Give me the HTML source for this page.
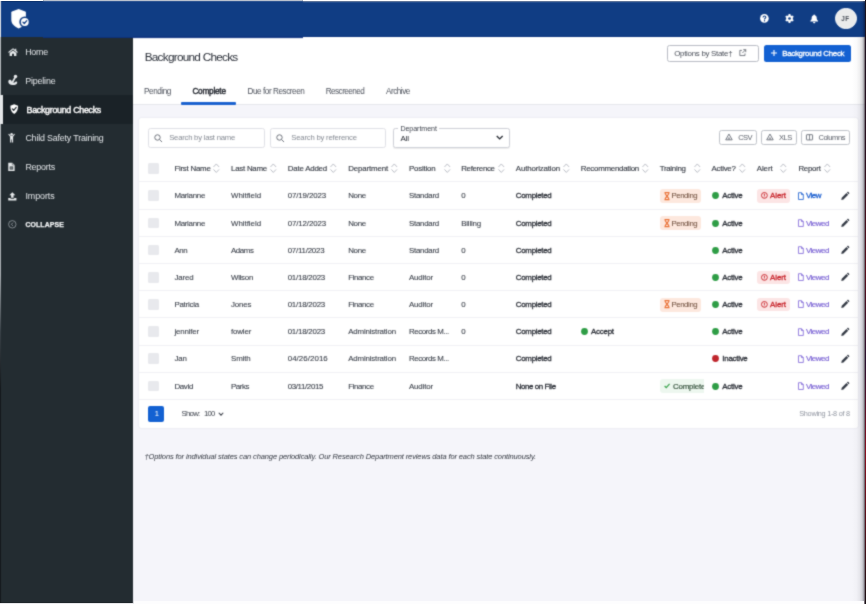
<!DOCTYPE html>
<html><head><meta charset="utf-8"><title>Background Checks</title>
<style>
*{box-sizing:border-box;margin:0;padding:0}
html,body{width:866px;height:604px;overflow:hidden;background:#fff}
body{font-family:"Liberation Sans",sans-serif;position:relative;color:#2b3038}
#w{position:absolute;left:0;top:0;width:866px;height:604px;filter:url(#bl)}
.a,.t{position:absolute}
.t{white-space:nowrap;line-height:12px;height:12px}
svg{position:absolute;overflow:visible}
.hl{position:absolute;left:139px;width:719px;height:1px;background:#f0f0f5}
.cb{position:absolute;left:148px;width:10.6px;height:10.8px;background:#e8e9ed;border-radius:1.5px}
.dot{position:absolute;width:6.8px;height:6.8px;border-radius:50%}
.pill{position:absolute;height:14px;border-radius:3px}
.in{position:absolute;top:128px;height:20px;border:1px solid #dfe0e6;border-radius:2.5px;background:#fff}
.sb{position:absolute;top:130px;height:15.4px;border:1px solid #bfc2c9;border-radius:2.5px;background:#fff}
</style></head><body><svg width="0" height="0" style="position:absolute"><filter id="bl" x="0" y="0" width="100%" height="100%" color-interpolation-filters="sRGB"><feConvolveMatrix order="3" kernelMatrix="0.03 0.1 0.03 0.1 0.48 0.1 0.03 0.1 0.03" edgeMode="duplicate" preserveAlpha="true"/></filter></svg><div id="w">

<div class="a" style="left:0;top:1px;width:866px;height:36px;background:#103d84"></div>
<div class="a" style="left:0;top:0;width:1.3px;height:37px;background:#dfe2e8"></div>
<div class="a" style="left:43px;top:37px;width:260px;height:1px;background:#103d84;opacity:.85"></div>
<div class="a" style="left:43px;top:0;width:260px;height:1px;background:#d9dadc"></div>
<div class="a" style="left:303px;top:1px;width:563px;height:1px;background:rgba(255,255,255,.5)"></div>
<div class="a" style="left:1px;top:37px;width:132px;height:566px;background:#232c31"></div>
<div class="a" style="left:0;top:37px;width:1.3px;height:566px;background:linear-gradient(to bottom,#b4b9bc 0%,#a9aeb2 42%,#3a4248 52%,#14181b 62%,#14181b 100%)"></div>
<div class="a" style="left:2.6px;top:94.8px;width:130.4px;height:28.8px;background:#1a2227"></div>
<div class="a" style="left:0;top:94.8px;width:2.6px;height:28.8px;background:#e4e6e8"></div>
<div class="a" style="left:133px;top:37px;width:733px;height:567px;background:#f5f5fa"></div>
<div class="a" style="left:133px;top:37px;width:733px;height:68px;background:#fff;border-bottom:1px solid #e6e7ec"></div>
<div class="a" style="left:43px;top:37px;width:260px;height:1px;background:#0c3280;opacity:.92"></div>
<div class="a" style="left:133px;top:38px;width:170px;height:1px;background:#0c3280;opacity:.1"></div>
<div class="a" style="left:133px;top:36px;width:733px;height:1px;background:#0b2f7e;opacity:.55"></div>
<div class="a" style="left:139px;top:118px;width:719px;height:309.6px;background:#fff;border-radius:2px;box-shadow:0 0 1.5px rgba(70,70,110,.18)"></div>
<svg style="left:0;top:0" width="40" height="37" viewBox="0 0 40 37">
<path d="M18.6 9.1 L25.3 11.5 Q25.9 11.8 25.9 12.5 V19.8 C25.9 24 22.6 26.8 18.7 28.4 C14.7 26.8 11.3 24 11.3 19.8 V12.5 Q11.3 11.8 11.9 11.5 Z" fill="#fff"/>
<circle cx="24.8" cy="22" r="5.5" fill="#103d84"/>
<circle cx="24.8" cy="22" r="3.9" fill="#fff"/>
<path d="M22.9 22.1 L24.3 23.5 L26.8 20.6" fill="none" stroke="#103d84" stroke-width="1.25" stroke-linecap="round" stroke-linejoin="round"/>
</svg>
<svg style="left:760.4px;top:14px" width="8.8" height="8.8" viewBox="0 0 9 9"><circle cx="4.5" cy="4.5" r="4.4" fill="#fff"/><path d="M3.1 3.5C3.1 2.6 3.7 2.1 4.5 2.1C5.4 2.1 6 2.6 6 3.4C6 4.4 4.6 4.4 4.6 5.5" fill="none" stroke="#103d84" stroke-width="1.1"/><circle cx="4.6" cy="6.9" r="0.65" fill="#103d84"/></svg>
<svg style="left:785.3px;top:14px" width="9" height="9" viewBox="0 0 9 9"><circle cx="4.5" cy="4.5" r="3.3" fill="#fff"/><g stroke="#fff" stroke-width="1.9"><path d="M4.5 0.1V8.9M0.7 2.3L8.3 6.7M8.3 2.3L0.7 6.7"/></g><circle cx="4.5" cy="4.5" r="1.35" fill="#103d84"/></svg>
<svg style="left:810.4px;top:13.8px" width="8.4" height="9.8" viewBox="0 0 9 10"><path d="M4.5 0.3 C4 0.3 3.7 0.6 3.7 1 C2.4 1.4 1.8 2.5 1.8 4 C1.8 5.8 1.2 6.3 0.4 7.1 V7.8 H8.6 V7.1 C7.8 6.3 7.2 5.8 7.2 4 C7.2 2.5 6.6 1.4 5.3 1 C5.3 0.6 5 0.3 4.5 0.3 Z" fill="#fff"/><path d="M3.3 8.4 H5.7 C5.7 9.2 5.2 9.8 4.5 9.8 C3.8 9.8 3.3 9.2 3.3 8.4Z" fill="#fff"/></svg>
<div class="a" style="left:835px;top:7.6px;width:21.6px;height:21.6px;border-radius:50%;background:#ebebeb;border:1px solid #fff"></div>
<svg style="left:8.2px;top:47.6px" width="10" height="8" viewBox="0 0 11 9"><path d="M5.5 0.2 L0.1 4.6 L0.9 5.5 L5.5 1.8 L10.1 5.5 L10.9 4.6 L9.2 3.2 V0.8 H7.9 V2.1 Z" fill="#e6e9eb"/><path d="M5.5 2.7 L1.7 5.7 V8.9 H4.4 V6.4 H6.6 V8.9 H9.3 V5.7 Z" fill="#e6e9eb"/></svg>
<svg style="left:0;top:70px" width="24" height="20" viewBox="0 70 24 20"><circle cx="15.5" cy="76.5" r="1.75" fill="#e6e9eb"/><path d="M15 77.6L12.6 82" stroke="#e6e9eb" stroke-width="1.7" stroke-linecap="round"/><path d="M8.3 81.6C8.3 80.1 9.4 79.6 10.4 79.8C11.5 80 11.6 81.6 12.4 82.4L14.8 82.4C15.4 81 17.2 81.1 17.2 82.5C17.2 84.3 15.1 85.1 12.6 85.1C10 85.1 8.3 83.9 8.3 81.6Z" fill="#e6e9eb"/></svg>
<svg style="left:9.6px;top:104.3px" width="8.4" height="10.2" viewBox="0 0 10 12"><path d="M5 0.2 L0.4 1.9 C0.3 6.2 1.6 9.7 5 11.8 C8.4 9.7 9.7 6.2 9.6 1.9 Z" fill="#fff"/><path d="M2.8 5.8 L4.4 7.4 L7.4 4" fill="none" stroke="#1a2227" stroke-width="1.4" stroke-linecap="round" stroke-linejoin="round"/></svg>
<svg style="left:8.3px;top:132.8px" width="7.2" height="9.8" viewBox="0 0 8 11"><circle cx="4" cy="1.5" r="1.4" fill="#e6e9eb"/><path d="M0.2 1.5 L1.1 0.8 L3 3.1 H5 L6.9 0.8 L7.8 1.5 L5.7 4.3 V10.8 H4.4 V7.4 H3.6 V10.8 H2.3 V4.3 Z" fill="#e6e9eb"/></svg>
<svg style="left:8.3px;top:162px" width="6.9" height="9.6" viewBox="0 0 8 10"><path d="M0.3 0.2 H5 L7.7 2.9 V9.8 H0.3 Z" fill="#e6e9eb"/><path d="M2 4.6 H6 V8.2 H2Z" fill="#232c31"/><path d="M2.6 5.5H5.4M2.6 6.4H5.4M2.6 7.3H5.4" stroke="#e6e9eb" stroke-width="0.45"/><path d="M5 0.2V2.9H7.7" fill="none" stroke="#232c31" stroke-width="0.5"/></svg>
<svg style="left:8.3px;top:191.8px" width="8.7" height="8.7" viewBox="0 0 10 10"><path d="M5 0.2 L8.4 3.7 H6.4 V6.7 H3.6 V3.7 H1.6 Z" fill="#e6e9eb"/><path d="M0.3 7 H2.9 V7.7 H7.1 V7 H9.7 V9.8 H0.3 Z" fill="#e6e9eb"/></svg>
<svg style="left:8.3px;top:220.3px" width="8.6" height="8.6" viewBox="0 0 9 9"><circle cx="4.5" cy="4.5" r="3.9" fill="none" stroke="#a4abb1" stroke-width="0.75"/><path d="M5.2 2.8 L3.5 4.5 L5.2 6.2" fill="none" stroke="#a4abb1" stroke-width="0.85"/></svg>
<div class="a" style="left:667px;top:44.9px;width:91.7px;height:16.8px;border:1px solid #b9bcc4;border-radius:2.5px;background:#fff"></div>
<svg style="left:738.6px;top:49.4px" width="7.4" height="7.4" viewBox="0 0 8 8"><path d="M3.2 1.5H0.9V7.1H6.5V4.8M4.6 0.7H7.3V3.4M7.3 0.7L3.6 4.4" fill="none" stroke="#5a5f69" stroke-width="0.85"/></svg>
<div class="a" style="left:764px;top:44.9px;width:87px;height:16.8px;border-radius:2.5px;background:#1361d2"></div>
<svg style="left:770.7px;top:50.3px" width="6" height="6" viewBox="0 0 6 6"><path d="M3 0V6M0 3H6" stroke="#fff" stroke-width="1.1"/></svg>
<div class="a" style="left:181.4px;top:102.4px;width:55px;height:2.5px;background:#1b62cf;border-radius:1px"></div>
<div class="in" style="left:148.4px;width:116.4px"></div><svg style="left:153.5px;top:133.8px" width="8.7" height="8.7" viewBox="0 0 8 8"><circle cx="3.2" cy="3.2" r="2.5" fill="none" stroke="#6b7079" stroke-width="0.9"/><path d="M5.1 5.1L7.4 7.4" stroke="#6b7079" stroke-width="0.9"/></svg>
<div class="in" style="left:270px;width:116.4px"></div><svg style="left:275.5px;top:133.8px" width="8.7" height="8.7" viewBox="0 0 8 8"><circle cx="3.2" cy="3.2" r="2.5" fill="none" stroke="#6b7079" stroke-width="0.9"/><path d="M5.1 5.1L7.4 7.4" stroke="#6b7079" stroke-width="0.9"/></svg>
<div class="in" style="left:393px;width:116.6px;border-color:#cfd1d8;box-shadow:0 0.5px 1px rgba(0,0,0,.08)"></div>
<div class="a" style="left:398.4px;top:126px;width:40.6px;height:5px;background:#fff"></div>
<svg style="left:496.4px;top:135.2px" width="7.4" height="5" viewBox="0 0 8 5"><path d="M0.8 0.8L4 4L7.2 0.8" fill="none" stroke="#23272f" stroke-width="1.4"/></svg>
<div class="sb" style="left:719.3px;width:37.6px"></div><svg style="left:724.8px;top:133.2px" width="7.9" height="7.9" viewBox="0 0 9 9"><path d="M4.5 1.2L8.2 7.8H0.8Z" fill="none" stroke="#6a6f79" stroke-width="1.05" stroke-linejoin="round"/><path d="M4.5 5L5.7 7H3.3Z" fill="none" stroke="#6a6f79" stroke-width="0.7" stroke-linejoin="round"/></svg>
<div class="sb" style="left:760.8px;width:36px"></div><svg style="left:766px;top:133.2px" width="7.9" height="7.9" viewBox="0 0 9 9"><path d="M4.5 1.2L8.2 7.8H0.8Z" fill="none" stroke="#6a6f79" stroke-width="1.05" stroke-linejoin="round"/><path d="M4.5 5L5.7 7H3.3Z" fill="none" stroke="#6a6f79" stroke-width="0.7" stroke-linejoin="round"/></svg>
<div class="sb" style="left:800.7px;width:49.4px"></div>
<svg style="left:805.7px;top:134px" width="7" height="6.6" viewBox="0 0 8 7"><rect x="0.5" y="0.5" width="7" height="6" rx="0.5" fill="none" stroke="#646973" stroke-width="1"/><path d="M4 0.5V6.5" stroke="#646973" stroke-width="0.9"/></svg>
<div class="cb" style="top:163px"></div>
<svg style="left:213.3px;top:163px" width="6.6" height="10.4" viewBox="0 0 7 11"><path d="M0.8 3.9 L3.5 1 L6.2 3.9 M0.8 7.1 L3.5 10 L6.2 7.1" fill="none" stroke="#b6b9c1" stroke-width="1" stroke-linecap="round" stroke-linejoin="round"/></svg>
<svg style="left:270px;top:163px" width="6.6" height="10.4" viewBox="0 0 7 11"><path d="M0.8 3.9 L3.5 1 L6.2 3.9 M0.8 7.1 L3.5 10 L6.2 7.1" fill="none" stroke="#b6b9c1" stroke-width="1" stroke-linecap="round" stroke-linejoin="round"/></svg>
<svg style="left:330.3px;top:163px" width="6.6" height="10.4" viewBox="0 0 7 11"><path d="M0.8 3.9 L3.5 1 L6.2 3.9 M0.8 7.1 L3.5 10 L6.2 7.1" fill="none" stroke="#b6b9c1" stroke-width="1" stroke-linecap="round" stroke-linejoin="round"/></svg>
<svg style="left:391.4px;top:163px" width="6.6" height="10.4" viewBox="0 0 7 11"><path d="M0.8 3.9 L3.5 1 L6.2 3.9 M0.8 7.1 L3.5 10 L6.2 7.1" fill="none" stroke="#b6b9c1" stroke-width="1" stroke-linecap="round" stroke-linejoin="round"/></svg>
<svg style="left:443.5px;top:163px" width="6.6" height="10.4" viewBox="0 0 7 11"><path d="M0.8 3.9 L3.5 1 L6.2 3.9 M0.8 7.1 L3.5 10 L6.2 7.1" fill="none" stroke="#b6b9c1" stroke-width="1" stroke-linecap="round" stroke-linejoin="round"/></svg>
<svg style="left:498px;top:163px" width="6.6" height="10.4" viewBox="0 0 7 11"><path d="M0.8 3.9 L3.5 1 L6.2 3.9 M0.8 7.1 L3.5 10 L6.2 7.1" fill="none" stroke="#b6b9c1" stroke-width="1" stroke-linecap="round" stroke-linejoin="round"/></svg>
<svg style="left:562.9px;top:163px" width="6.6" height="10.4" viewBox="0 0 7 11"><path d="M0.8 3.9 L3.5 1 L6.2 3.9 M0.8 7.1 L3.5 10 L6.2 7.1" fill="none" stroke="#b6b9c1" stroke-width="1" stroke-linecap="round" stroke-linejoin="round"/></svg>
<svg style="left:641.7px;top:163px" width="6.6" height="10.4" viewBox="0 0 7 11"><path d="M0.8 3.9 L3.5 1 L6.2 3.9 M0.8 7.1 L3.5 10 L6.2 7.1" fill="none" stroke="#b6b9c1" stroke-width="1" stroke-linecap="round" stroke-linejoin="round"/></svg>
<svg style="left:693.8px;top:163px" width="6.6" height="10.4" viewBox="0 0 7 11"><path d="M0.8 3.9 L3.5 1 L6.2 3.9 M0.8 7.1 L3.5 10 L6.2 7.1" fill="none" stroke="#b6b9c1" stroke-width="1" stroke-linecap="round" stroke-linejoin="round"/></svg>
<svg style="left:739px;top:163px" width="6.6" height="10.4" viewBox="0 0 7 11"><path d="M0.8 3.9 L3.5 1 L6.2 3.9 M0.8 7.1 L3.5 10 L6.2 7.1" fill="none" stroke="#b6b9c1" stroke-width="1" stroke-linecap="round" stroke-linejoin="round"/></svg>
<svg style="left:780.3px;top:163px" width="6.6" height="10.4" viewBox="0 0 7 11"><path d="M0.8 3.9 L3.5 1 L6.2 3.9 M0.8 7.1 L3.5 10 L6.2 7.1" fill="none" stroke="#b6b9c1" stroke-width="1" stroke-linecap="round" stroke-linejoin="round"/></svg>
<svg style="left:823.8px;top:163px" width="6.6" height="10.4" viewBox="0 0 7 11"><path d="M0.8 3.9 L3.5 1 L6.2 3.9 M0.8 7.1 L3.5 10 L6.2 7.1" fill="none" stroke="#b6b9c1" stroke-width="1" stroke-linecap="round" stroke-linejoin="round"/></svg>
<div class="hl" style="top:180.6px"></div>
<div class="cb" style="top:190.4px"></div>
<div class="pill" style="left:659.7px;top:188.8px;width:41.6px;background:#fde8de"></div>
<svg style="left:663.6px;top:191.7px" width="6" height="8.3" viewBox="0 0 6 8"><path d="M0.5 0.5H5.5M0.5 7.5H5.5M1.1 0.5C1.1 2.7 2.7 3.1 3 4C3.3 3.1 4.9 2.7 4.9 0.5M1.1 7.5C1.1 5.3 2.7 4.9 3 4C3.3 4.9 4.9 5.3 4.9 7.5" fill="none" stroke="#ea7339" stroke-width="1.15"/></svg>
<svg style="left:711.5px;top:192.4px" width="7" height="7"><circle cx="3.5" cy="3.5" r="3.4" fill="#2e9d45"/></svg>
<div class="pill" style="left:756.8px;top:189.0px;width:32.9px;height:13.8px;background:#fce5e5"></div>
<svg style="left:761px;top:192.2px" width="6.8" height="6.8" viewBox="0 0 7 7"><circle cx="3.5" cy="3.5" r="3" fill="none" stroke="#c8262d" stroke-width="0.95"/><path d="M3.5 1.7V4M3.5 4.7V5.4" stroke="#c8262d" stroke-width="0.95"/></svg>
<svg style="left:797.9px;top:191.7px" width="5.8" height="8.2" viewBox="0 0 6 8"><path d="M0.5 0.5H3.6L5.5 2.4V7.5H0.5Z M3.6 0.5V2.4H5.5" fill="none" stroke="#1b5fd0" stroke-width="0.85" stroke-linejoin="round"/></svg>
<svg style="left:841.3px;top:191.7px" width="8.2" height="8.2" viewBox="0 0 8 8"><path d="M0.3 7.7 L0.7 5.6 L5.3 1 L7 2.7 L2.4 7.3 Z M5.8 0.5 L6.3 0 C6.6 -0.2 7 -0.2 7.3 0.1 L7.9 0.7 C8.2 1 8.2 1.4 8 1.7 L7.5 2.2 Z" fill="#363c47"/></svg>
<div class="hl" style="top:208.7px"></div>
<div class="cb" style="top:217.6px"></div>
<div class="pill" style="left:659.7px;top:216.0px;width:41.6px;background:#fde8de"></div>
<svg style="left:663.6px;top:218.9px" width="6" height="8.3" viewBox="0 0 6 8"><path d="M0.5 0.5H5.5M0.5 7.5H5.5M1.1 0.5C1.1 2.7 2.7 3.1 3 4C3.3 3.1 4.9 2.7 4.9 0.5M1.1 7.5C1.1 5.3 2.7 4.9 3 4C3.3 4.9 4.9 5.3 4.9 7.5" fill="none" stroke="#ea7339" stroke-width="1.15"/></svg>
<svg style="left:711.5px;top:219.6px" width="7" height="7"><circle cx="3.5" cy="3.5" r="3.4" fill="#2e9d45"/></svg>
<svg style="left:797.9px;top:218.9px" width="5.8" height="8.2" viewBox="0 0 6 8"><path d="M0.5 0.5H3.6L5.5 2.4V7.5H0.5Z M3.6 0.5V2.4H5.5" fill="none" stroke="#8068d8" stroke-width="0.85" stroke-linejoin="round"/></svg>
<svg style="left:841.3px;top:218.9px" width="8.2" height="8.2" viewBox="0 0 8 8"><path d="M0.3 7.7 L0.7 5.6 L5.3 1 L7 2.7 L2.4 7.3 Z M5.8 0.5 L6.3 0 C6.6 -0.2 7 -0.2 7.3 0.1 L7.9 0.7 C8.2 1 8.2 1.4 8 1.7 L7.5 2.2 Z" fill="#363c47"/></svg>
<div class="hl" style="top:235.9px"></div>
<div class="cb" style="top:244.7px"></div>
<svg style="left:711.5px;top:246.7px" width="7" height="7"><circle cx="3.5" cy="3.5" r="3.4" fill="#2e9d45"/></svg>
<svg style="left:797.9px;top:246.0px" width="5.8" height="8.2" viewBox="0 0 6 8"><path d="M0.5 0.5H3.6L5.5 2.4V7.5H0.5Z M3.6 0.5V2.4H5.5" fill="none" stroke="#8068d8" stroke-width="0.85" stroke-linejoin="round"/></svg>
<svg style="left:841.3px;top:246.0px" width="8.2" height="8.2" viewBox="0 0 8 8"><path d="M0.3 7.7 L0.7 5.6 L5.3 1 L7 2.7 L2.4 7.3 Z M5.8 0.5 L6.3 0 C6.6 -0.2 7 -0.2 7.3 0.1 L7.9 0.7 C8.2 1 8.2 1.4 8 1.7 L7.5 2.2 Z" fill="#363c47"/></svg>
<div class="hl" style="top:263.0px"></div>
<div class="cb" style="top:271.9px"></div>
<svg style="left:711.5px;top:273.9px" width="7" height="7"><circle cx="3.5" cy="3.5" r="3.4" fill="#2e9d45"/></svg>
<div class="pill" style="left:756.8px;top:270.5px;width:32.9px;height:13.8px;background:#fce5e5"></div>
<svg style="left:761px;top:273.7px" width="6.8" height="6.8" viewBox="0 0 7 7"><circle cx="3.5" cy="3.5" r="3" fill="none" stroke="#c8262d" stroke-width="0.95"/><path d="M3.5 1.7V4M3.5 4.7V5.4" stroke="#c8262d" stroke-width="0.95"/></svg>
<svg style="left:797.9px;top:273.2px" width="5.8" height="8.2" viewBox="0 0 6 8"><path d="M0.5 0.5H3.6L5.5 2.4V7.5H0.5Z M3.6 0.5V2.4H5.5" fill="none" stroke="#8068d8" stroke-width="0.85" stroke-linejoin="round"/></svg>
<svg style="left:841.3px;top:273.2px" width="8.2" height="8.2" viewBox="0 0 8 8"><path d="M0.3 7.7 L0.7 5.6 L5.3 1 L7 2.7 L2.4 7.3 Z M5.8 0.5 L6.3 0 C6.6 -0.2 7 -0.2 7.3 0.1 L7.9 0.7 C8.2 1 8.2 1.4 8 1.7 L7.5 2.2 Z" fill="#363c47"/></svg>
<div class="hl" style="top:290.2px"></div>
<div class="cb" style="top:299.1px"></div>
<div class="pill" style="left:659.7px;top:297.5px;width:41.6px;background:#fde8de"></div>
<svg style="left:663.6px;top:300.4px" width="6" height="8.3" viewBox="0 0 6 8"><path d="M0.5 0.5H5.5M0.5 7.5H5.5M1.1 0.5C1.1 2.7 2.7 3.1 3 4C3.3 3.1 4.9 2.7 4.9 0.5M1.1 7.5C1.1 5.3 2.7 4.9 3 4C3.3 4.9 4.9 5.3 4.9 7.5" fill="none" stroke="#ea7339" stroke-width="1.15"/></svg>
<svg style="left:711.5px;top:301.1px" width="7" height="7"><circle cx="3.5" cy="3.5" r="3.4" fill="#2e9d45"/></svg>
<div class="pill" style="left:756.8px;top:297.7px;width:32.9px;height:13.8px;background:#fce5e5"></div>
<svg style="left:761px;top:300.9px" width="6.8" height="6.8" viewBox="0 0 7 7"><circle cx="3.5" cy="3.5" r="3" fill="none" stroke="#c8262d" stroke-width="0.95"/><path d="M3.5 1.7V4M3.5 4.7V5.4" stroke="#c8262d" stroke-width="0.95"/></svg>
<svg style="left:797.9px;top:300.4px" width="5.8" height="8.2" viewBox="0 0 6 8"><path d="M0.5 0.5H3.6L5.5 2.4V7.5H0.5Z M3.6 0.5V2.4H5.5" fill="none" stroke="#8068d8" stroke-width="0.85" stroke-linejoin="round"/></svg>
<svg style="left:841.3px;top:300.4px" width="8.2" height="8.2" viewBox="0 0 8 8"><path d="M0.3 7.7 L0.7 5.6 L5.3 1 L7 2.7 L2.4 7.3 Z M5.8 0.5 L6.3 0 C6.6 -0.2 7 -0.2 7.3 0.1 L7.9 0.7 C8.2 1 8.2 1.4 8 1.7 L7.5 2.2 Z" fill="#363c47"/></svg>
<div class="hl" style="top:317.4px"></div>
<div class="cb" style="top:326.2px"></div>
<svg style="left:580.8px;top:328.2px" width="7" height="7"><circle cx="3.5" cy="3.5" r="3.4" fill="#2e9d45"/></svg>
<svg style="left:711.5px;top:328.2px" width="7" height="7"><circle cx="3.5" cy="3.5" r="3.4" fill="#2e9d45"/></svg>
<svg style="left:797.9px;top:327.6px" width="5.8" height="8.2" viewBox="0 0 6 8"><path d="M0.5 0.5H3.6L5.5 2.4V7.5H0.5Z M3.6 0.5V2.4H5.5" fill="none" stroke="#8068d8" stroke-width="0.85" stroke-linejoin="round"/></svg>
<svg style="left:841.3px;top:327.6px" width="8.2" height="8.2" viewBox="0 0 8 8"><path d="M0.3 7.7 L0.7 5.6 L5.3 1 L7 2.7 L2.4 7.3 Z M5.8 0.5 L6.3 0 C6.6 -0.2 7 -0.2 7.3 0.1 L7.9 0.7 C8.2 1 8.2 1.4 8 1.7 L7.5 2.2 Z" fill="#363c47"/></svg>
<div class="hl" style="top:344.6px"></div>
<div class="cb" style="top:353.4px"></div>
<svg style="left:711.5px;top:355.4px" width="7" height="7"><circle cx="3.5" cy="3.5" r="3.4" fill="#bf252c"/></svg>
<svg style="left:797.9px;top:354.7px" width="5.8" height="8.2" viewBox="0 0 6 8"><path d="M0.5 0.5H3.6L5.5 2.4V7.5H0.5Z M3.6 0.5V2.4H5.5" fill="none" stroke="#8068d8" stroke-width="0.85" stroke-linejoin="round"/></svg>
<svg style="left:841.3px;top:354.7px" width="8.2" height="8.2" viewBox="0 0 8 8"><path d="M0.3 7.7 L0.7 5.6 L5.3 1 L7 2.7 L2.4 7.3 Z M5.8 0.5 L6.3 0 C6.6 -0.2 7 -0.2 7.3 0.1 L7.9 0.7 C8.2 1 8.2 1.4 8 1.7 L7.5 2.2 Z" fill="#363c47"/></svg>
<div class="hl" style="top:371.7px"></div>
<div class="cb" style="top:380.6px"></div>
<div class="pill" style="left:659.7px;top:379.0px;width:43.9px;background:#edf7ef;border-radius:3px 0 0 3px"></div>
<svg style="left:664px;top:383.1px" width="6.2" height="5.6" viewBox="0 0 8 7"><path d="M0.8 3.8L2.9 5.9L7.2 1" fill="none" stroke="#39a34c" stroke-width="1.5"/></svg>
<svg style="left:711.5px;top:382.6px" width="7" height="7"><circle cx="3.5" cy="3.5" r="3.4" fill="#2e9d45"/></svg>
<svg style="left:797.9px;top:381.9px" width="5.8" height="8.2" viewBox="0 0 6 8"><path d="M0.5 0.5H3.6L5.5 2.4V7.5H0.5Z M3.6 0.5V2.4H5.5" fill="none" stroke="#8068d8" stroke-width="0.85" stroke-linejoin="round"/></svg>
<svg style="left:841.3px;top:381.9px" width="8.2" height="8.2" viewBox="0 0 8 8"><path d="M0.3 7.7 L0.7 5.6 L5.3 1 L7 2.7 L2.4 7.3 Z M5.8 0.5 L6.3 0 C6.6 -0.2 7 -0.2 7.3 0.1 L7.9 0.7 C8.2 1 8.2 1.4 8 1.7 L7.5 2.2 Z" fill="#363c47"/></svg>
<div class="hl" style="top:398.9px"></div>
<div class="a" style="left:148px;top:405.5px;width:16px;height:16.4px;background:#1361d2;border-radius:2px"></div>
<svg style="left:217.8px;top:411.5px" width="6" height="4.2" viewBox="0 0 7 5"><path d="M0.8 0.9L3.5 3.8L6.2 0.9" fill="none" stroke="#3a3f49" stroke-width="1.25"/></svg>
<div class="t" style="left:841.2px;top:13.3px;font-size:6.3px;color:#4a4f58;letter-spacing:0.620px;font-weight:bold">JF</div>
<div class="t" style="left:25.2px;top:46.0px;font-size:8.9px;color:#e3e6e9;letter-spacing:-0.222px">Home</div>
<div class="t" style="left:25.2px;top:74.8px;font-size:8.9px;color:#e3e6e9;letter-spacing:-0.162px">Pipeline</div>
<div class="t" style="left:26.5px;top:103.9px;font-size:8.9px;color:#fff;letter-spacing:-0.290px;-webkit-text-stroke:0.4px #fff">Background Checks</div>
<div class="t" style="left:25.4px;top:132.2px;font-size:8.9px;color:#e3e6e9;letter-spacing:-0.176px">Child Safety Training</div>
<div class="t" style="left:25.4px;top:161.2px;font-size:8.9px;color:#e3e6e9;letter-spacing:-0.211px">Reports</div>
<div class="t" style="left:25.4px;top:189.9px;font-size:8.9px;color:#e3e6e9;letter-spacing:-0.056px">Imports</div>
<div class="t" style="left:25.4px;top:219.0px;font-size:6.9px;color:#f2f4f5;letter-spacing:0.134px;font-weight:bold;-webkit-text-stroke:0.25px #f2f4f5">COLLAPSE</div>
<div class="t" style="left:144.7px;top:50.9px;font-size:11.8px;color:#2a2f38;letter-spacing:-0.752px">Background Checks</div>
<div class="t" style="left:674.2px;top:48.0px;font-size:7.9px;color:#4a4f59;letter-spacing:-0.273px">Options by State†</div>
<div class="t" style="left:782.2px;top:48.0px;font-size:7.9px;color:#fff;letter-spacing:-0.286px;-webkit-text-stroke:0.3px #fff">Background Check</div>
<div class="t" style="left:144.0px;top:85.7px;font-size:8.2px;color:#4d525c;letter-spacing:-0.438px">Pending</div>
<div class="t" style="left:192.4px;top:85.7px;font-size:8.2px;color:#23272f;letter-spacing:-0.206px;-webkit-text-stroke:0.4px #23272f">Complete</div>
<div class="t" style="left:247.5px;top:85.7px;font-size:8.2px;color:#4d525c;letter-spacing:-0.454px">Due for Rescreen</div>
<div class="t" style="left:325.7px;top:85.7px;font-size:8.2px;color:#4d525c;letter-spacing:-0.546px">Rescreened</div>
<div class="t" style="left:386.0px;top:85.7px;font-size:8.2px;color:#4d525c;letter-spacing:-0.502px">Archive</div>
<div class="t" style="left:169.2px;top:132.0px;font-size:7.7px;color:#858a93;letter-spacing:-0.225px">Search by last name</div>
<div class="t" style="left:291.3px;top:132.0px;font-size:7.7px;color:#858a93;letter-spacing:-0.197px">Search by reference</div>
<div class="t" style="left:400.4px;top:123.2px;font-size:7.1px;color:#3f444e;letter-spacing:-0.066px">Department</div>
<div class="t" style="left:400.4px;top:132.6px;font-size:8px;color:#23272f;letter-spacing:-0.164px">All</div>
<div class="t" style="left:738.3px;top:131.7px;font-size:7.5px;color:#5a5f69;letter-spacing:-0.641px">CSV</div>
<div class="t" style="left:779.0px;top:131.7px;font-size:7.5px;color:#5a5f69;letter-spacing:-0.496px">XLS</div>
<div class="t" style="left:818.4px;top:131.7px;font-size:7.5px;color:#5a5f69;letter-spacing:-0.428px">Columns</div>
<div class="t" style="left:174.4px;top:162.6px;font-size:7.9px;color:#3a3f48;letter-spacing:-0.239px;-webkit-text-stroke:0.15px #3a3f48">First Name</div>
<div class="t" style="left:231.0px;top:162.6px;font-size:7.9px;color:#3a3f48;letter-spacing:-0.240px;-webkit-text-stroke:0.15px #3a3f48">Last Name</div>
<div class="t" style="left:287.7px;top:162.6px;font-size:7.9px;color:#3a3f48;letter-spacing:-0.195px;-webkit-text-stroke:0.15px #3a3f48">Date Added</div>
<div class="t" style="left:348.2px;top:162.6px;font-size:7.9px;color:#3a3f48;letter-spacing:-0.143px;-webkit-text-stroke:0.15px #3a3f48">Department</div>
<div class="t" style="left:409.0px;top:162.6px;font-size:7.9px;color:#3a3f48;letter-spacing:-0.222px;-webkit-text-stroke:0.15px #3a3f48">Position</div>
<div class="t" style="left:461.2px;top:162.6px;font-size:7.9px;color:#3a3f48;letter-spacing:-0.323px;-webkit-text-stroke:0.15px #3a3f48">Reference</div>
<div class="t" style="left:515.8px;top:162.6px;font-size:7.9px;color:#3a3f48;letter-spacing:-0.151px;-webkit-text-stroke:0.15px #3a3f48">Authorization</div>
<div class="t" style="left:580.8px;top:162.6px;font-size:7.9px;color:#3a3f48;letter-spacing:-0.260px;-webkit-text-stroke:0.15px #3a3f48">Recommendation</div>
<div class="t" style="left:659.7px;top:162.6px;font-size:7.9px;color:#3a3f48;letter-spacing:-0.290px;-webkit-text-stroke:0.15px #3a3f48">Training</div>
<div class="t" style="left:711.6px;top:162.6px;font-size:7.9px;color:#3a3f48;letter-spacing:-0.270px;-webkit-text-stroke:0.15px #3a3f48">Active?</div>
<div class="t" style="left:756.8px;top:162.6px;font-size:7.9px;color:#3a3f48;letter-spacing:-0.107px;-webkit-text-stroke:0.15px #3a3f48">Alert</div>
<div class="t" style="left:798.4px;top:162.6px;font-size:7.9px;color:#3a3f48;letter-spacing:-0.248px;-webkit-text-stroke:0.15px #3a3f48">Report</div>
<div class="t" style="left:174.4px;top:190.3px;font-size:7.9px;color:#3b404a;letter-spacing:-0.288px;-webkit-text-stroke:0.1px #3b404a">Marianne</div>
<div class="t" style="left:231.0px;top:190.3px;font-size:7.9px;color:#3b404a;letter-spacing:-0.030px;-webkit-text-stroke:0.1px #3b404a">Whitfield</div>
<div class="t" style="left:287.7px;top:190.3px;font-size:7.9px;color:#3b404a;letter-spacing:-0.120px;-webkit-text-stroke:0.1px #3b404a">07/19/2023</div>
<div class="t" style="left:348.2px;top:190.3px;font-size:7.9px;color:#3b404a;letter-spacing:-0.269px;-webkit-text-stroke:0.1px #3b404a">None</div>
<div class="t" style="left:409.0px;top:190.3px;font-size:7.9px;color:#3b404a;letter-spacing:-0.254px;-webkit-text-stroke:0.1px #3b404a">Standard</div>
<div class="t" style="left:461.2px;top:190.3px;font-size:7.9px;color:#3b404a;letter-spacing:-0.091px;-webkit-text-stroke:0.1px #3b404a">0</div>
<div class="t" style="left:515.8px;top:190.3px;font-size:7.9px;color:#2b2f37;letter-spacing:-0.275px;-webkit-text-stroke:0.3px #2b2f37">Completed</div>
<div class="t" style="left:671.4px;top:190.3px;font-size:7.9px;color:#6b4a38;letter-spacing:-0.438px">Pending</div>
<div class="t" style="left:722.3px;top:190.3px;font-size:7.9px;color:#2b2f37;letter-spacing:-0.217px;-webkit-text-stroke:0.3px #2b2f37">Active</div>
<div class="t" style="left:770.0px;top:190.3px;font-size:7.9px;color:#c8262d;letter-spacing:-0.047px;-webkit-text-stroke:0.3px #c8262d">Alert</div>
<div class="t" style="left:805.9px;top:190.3px;font-size:7.9px;color:#1b5fd0;letter-spacing:-0.492px;-webkit-text-stroke:0.3px #1b5fd0">View</div>
<div class="t" style="left:174.4px;top:217.5px;font-size:7.9px;color:#3b404a;letter-spacing:-0.288px;-webkit-text-stroke:0.1px #3b404a">Marianne</div>
<div class="t" style="left:231.0px;top:217.5px;font-size:7.9px;color:#3b404a;letter-spacing:-0.030px;-webkit-text-stroke:0.1px #3b404a">Whitfield</div>
<div class="t" style="left:287.7px;top:217.5px;font-size:7.9px;color:#3b404a;letter-spacing:-0.120px;-webkit-text-stroke:0.1px #3b404a">07/12/2023</div>
<div class="t" style="left:348.2px;top:217.5px;font-size:7.9px;color:#3b404a;letter-spacing:-0.269px;-webkit-text-stroke:0.1px #3b404a">None</div>
<div class="t" style="left:409.0px;top:217.5px;font-size:7.9px;color:#3b404a;letter-spacing:-0.254px;-webkit-text-stroke:0.1px #3b404a">Standard</div>
<div class="t" style="left:461.2px;top:217.5px;font-size:7.9px;color:#3b404a;letter-spacing:-0.180px;-webkit-text-stroke:0.1px #3b404a">Billing</div>
<div class="t" style="left:515.8px;top:217.5px;font-size:7.9px;color:#2b2f37;letter-spacing:-0.275px;-webkit-text-stroke:0.3px #2b2f37">Completed</div>
<div class="t" style="left:671.4px;top:217.5px;font-size:7.9px;color:#6b4a38;letter-spacing:-0.438px">Pending</div>
<div class="t" style="left:722.3px;top:217.5px;font-size:7.9px;color:#2b2f37;letter-spacing:-0.217px;-webkit-text-stroke:0.3px #2b2f37">Active</div>
<div class="t" style="left:805.9px;top:217.5px;font-size:7.9px;color:#7a62d4;letter-spacing:-0.458px;-webkit-text-stroke:0.18px #7a62d4">Viewed</div>
<div class="t" style="left:174.4px;top:244.6px;font-size:7.9px;color:#3b404a;letter-spacing:-0.349px;-webkit-text-stroke:0.1px #3b404a">Ann</div>
<div class="t" style="left:231.0px;top:244.6px;font-size:7.9px;color:#3b404a;letter-spacing:-0.412px;-webkit-text-stroke:0.1px #3b404a">Adams</div>
<div class="t" style="left:287.7px;top:244.6px;font-size:7.9px;color:#3b404a;letter-spacing:-0.231px;-webkit-text-stroke:0.1px #3b404a">07/11/2023</div>
<div class="t" style="left:348.2px;top:244.6px;font-size:7.9px;color:#3b404a;letter-spacing:-0.269px;-webkit-text-stroke:0.1px #3b404a">None</div>
<div class="t" style="left:409.0px;top:244.6px;font-size:7.9px;color:#3b404a;letter-spacing:-0.254px;-webkit-text-stroke:0.1px #3b404a">Standard</div>
<div class="t" style="left:461.2px;top:244.6px;font-size:7.9px;color:#3b404a;letter-spacing:-0.091px;-webkit-text-stroke:0.1px #3b404a">0</div>
<div class="t" style="left:515.8px;top:244.6px;font-size:7.9px;color:#2b2f37;letter-spacing:-0.275px;-webkit-text-stroke:0.3px #2b2f37">Completed</div>
<div class="t" style="left:722.3px;top:244.6px;font-size:7.9px;color:#2b2f37;letter-spacing:-0.217px;-webkit-text-stroke:0.3px #2b2f37">Active</div>
<div class="t" style="left:805.9px;top:244.6px;font-size:7.9px;color:#7a62d4;letter-spacing:-0.458px;-webkit-text-stroke:0.18px #7a62d4">Viewed</div>
<div class="t" style="left:174.4px;top:271.8px;font-size:7.9px;color:#3b404a;letter-spacing:-0.110px;-webkit-text-stroke:0.1px #3b404a">Jared</div>
<div class="t" style="left:231.0px;top:271.8px;font-size:7.9px;color:#3b404a;letter-spacing:-0.281px;-webkit-text-stroke:0.1px #3b404a">Wilson</div>
<div class="t" style="left:287.7px;top:271.8px;font-size:7.9px;color:#3b404a;letter-spacing:-0.220px;-webkit-text-stroke:0.1px #3b404a">01/18/2023</div>
<div class="t" style="left:348.2px;top:271.8px;font-size:7.9px;color:#3b404a;letter-spacing:-0.368px;-webkit-text-stroke:0.1px #3b404a">Finance</div>
<div class="t" style="left:409.0px;top:271.8px;font-size:7.9px;color:#3b404a;letter-spacing:-0.145px;-webkit-text-stroke:0.1px #3b404a">Auditor</div>
<div class="t" style="left:461.2px;top:271.8px;font-size:7.9px;color:#3b404a;letter-spacing:-0.091px;-webkit-text-stroke:0.1px #3b404a">0</div>
<div class="t" style="left:515.8px;top:271.8px;font-size:7.9px;color:#2b2f37;letter-spacing:-0.275px;-webkit-text-stroke:0.3px #2b2f37">Completed</div>
<div class="t" style="left:722.3px;top:271.8px;font-size:7.9px;color:#2b2f37;letter-spacing:-0.217px;-webkit-text-stroke:0.3px #2b2f37">Active</div>
<div class="t" style="left:770.0px;top:271.8px;font-size:7.9px;color:#c8262d;letter-spacing:-0.047px;-webkit-text-stroke:0.3px #c8262d">Alert</div>
<div class="t" style="left:805.9px;top:271.8px;font-size:7.9px;color:#7a62d4;letter-spacing:-0.458px;-webkit-text-stroke:0.18px #7a62d4">Viewed</div>
<div class="t" style="left:174.4px;top:299.0px;font-size:7.9px;color:#3b404a;letter-spacing:-0.214px;-webkit-text-stroke:0.1px #3b404a">Patricia</div>
<div class="t" style="left:231.0px;top:299.0px;font-size:7.9px;color:#3b404a;letter-spacing:-0.173px;-webkit-text-stroke:0.1px #3b404a">Jones</div>
<div class="t" style="left:287.7px;top:299.0px;font-size:7.9px;color:#3b404a;letter-spacing:-0.220px;-webkit-text-stroke:0.1px #3b404a">01/18/2023</div>
<div class="t" style="left:348.2px;top:299.0px;font-size:7.9px;color:#3b404a;letter-spacing:-0.368px;-webkit-text-stroke:0.1px #3b404a">Finance</div>
<div class="t" style="left:409.0px;top:299.0px;font-size:7.9px;color:#3b404a;letter-spacing:-0.145px;-webkit-text-stroke:0.1px #3b404a">Auditor</div>
<div class="t" style="left:461.2px;top:299.0px;font-size:7.9px;color:#3b404a;letter-spacing:-0.091px;-webkit-text-stroke:0.1px #3b404a">0</div>
<div class="t" style="left:515.8px;top:299.0px;font-size:7.9px;color:#2b2f37;letter-spacing:-0.275px;-webkit-text-stroke:0.3px #2b2f37">Completed</div>
<div class="t" style="left:671.4px;top:299.0px;font-size:7.9px;color:#6b4a38;letter-spacing:-0.438px">Pending</div>
<div class="t" style="left:722.3px;top:299.0px;font-size:7.9px;color:#2b2f37;letter-spacing:-0.217px;-webkit-text-stroke:0.3px #2b2f37">Active</div>
<div class="t" style="left:770.0px;top:299.0px;font-size:7.9px;color:#c8262d;letter-spacing:-0.047px;-webkit-text-stroke:0.3px #c8262d">Alert</div>
<div class="t" style="left:805.9px;top:299.0px;font-size:7.9px;color:#7a62d4;letter-spacing:-0.458px;-webkit-text-stroke:0.18px #7a62d4">Viewed</div>
<div class="t" style="left:174.4px;top:326.1px;font-size:7.9px;color:#3b404a;letter-spacing:-0.161px;-webkit-text-stroke:0.1px #3b404a">jennifer</div>
<div class="t" style="left:231.0px;top:326.1px;font-size:7.9px;color:#3b404a;letter-spacing:-0.144px;-webkit-text-stroke:0.1px #3b404a">fowler</div>
<div class="t" style="left:287.7px;top:326.1px;font-size:7.9px;color:#3b404a;letter-spacing:-0.220px;-webkit-text-stroke:0.1px #3b404a">01/18/2023</div>
<div class="t" style="left:348.2px;top:326.1px;font-size:7.9px;color:#3b404a;letter-spacing:-0.164px;-webkit-text-stroke:0.1px #3b404a">Administration</div>
<div class="t" style="left:409.0px;top:326.1px;font-size:7.9px;color:#3b404a;letter-spacing:-0.411px;-webkit-text-stroke:0.1px #3b404a">Records M...</div>
<div class="t" style="left:461.2px;top:326.1px;font-size:7.9px;color:#3b404a;letter-spacing:-0.091px;-webkit-text-stroke:0.1px #3b404a">0</div>
<div class="t" style="left:515.8px;top:326.1px;font-size:7.9px;color:#2b2f37;letter-spacing:-0.275px;-webkit-text-stroke:0.3px #2b2f37">Completed</div>
<div class="t" style="left:591.0px;top:326.1px;font-size:7.9px;color:#2b2f37;letter-spacing:-0.221px;-webkit-text-stroke:0.3px #2b2f37">Accept</div>
<div class="t" style="left:722.3px;top:326.1px;font-size:7.9px;color:#2b2f37;letter-spacing:-0.217px;-webkit-text-stroke:0.3px #2b2f37">Active</div>
<div class="t" style="left:805.9px;top:326.1px;font-size:7.9px;color:#7a62d4;letter-spacing:-0.458px;-webkit-text-stroke:0.18px #7a62d4">Viewed</div>
<div class="t" style="left:174.4px;top:353.3px;font-size:7.9px;color:#3b404a;letter-spacing:-0.078px;-webkit-text-stroke:0.1px #3b404a">Jan</div>
<div class="t" style="left:231.0px;top:353.3px;font-size:7.9px;color:#3b404a;letter-spacing:-0.134px;-webkit-text-stroke:0.1px #3b404a">Smith</div>
<div class="t" style="left:287.7px;top:353.3px;font-size:7.9px;color:#3b404a;letter-spacing:0.060px;-webkit-text-stroke:0.1px #3b404a">04/26/2016</div>
<div class="t" style="left:348.2px;top:353.3px;font-size:7.9px;color:#3b404a;letter-spacing:-0.164px;-webkit-text-stroke:0.1px #3b404a">Administration</div>
<div class="t" style="left:409.0px;top:353.3px;font-size:7.9px;color:#3b404a;letter-spacing:-0.411px;-webkit-text-stroke:0.1px #3b404a">Records M...</div>
<div class="t" style="left:515.8px;top:353.3px;font-size:7.9px;color:#2b2f37;letter-spacing:-0.275px;-webkit-text-stroke:0.3px #2b2f37">Completed</div>
<div class="t" style="left:722.3px;top:353.3px;font-size:7.9px;color:#2b2f37;letter-spacing:-0.250px;-webkit-text-stroke:0.3px #2b2f37">Inactive</div>
<div class="t" style="left:805.9px;top:353.3px;font-size:7.9px;color:#7a62d4;letter-spacing:-0.458px;-webkit-text-stroke:0.18px #7a62d4">Viewed</div>
<div class="t" style="left:174.4px;top:380.5px;font-size:7.9px;color:#3b404a;letter-spacing:-0.318px;-webkit-text-stroke:0.1px #3b404a">David</div>
<div class="t" style="left:231.0px;top:380.5px;font-size:7.9px;color:#3b404a;letter-spacing:-0.434px;-webkit-text-stroke:0.1px #3b404a">Parks</div>
<div class="t" style="left:287.7px;top:380.5px;font-size:7.9px;color:#3b404a;letter-spacing:-0.361px;-webkit-text-stroke:0.1px #3b404a">03/11/2015</div>
<div class="t" style="left:348.2px;top:380.5px;font-size:7.9px;color:#3b404a;letter-spacing:-0.368px;-webkit-text-stroke:0.1px #3b404a">Finance</div>
<div class="t" style="left:409.0px;top:380.5px;font-size:7.9px;color:#3b404a;letter-spacing:-0.145px;-webkit-text-stroke:0.1px #3b404a">Auditor</div>
<div class="t" style="left:515.8px;top:380.5px;font-size:7.9px;color:#2b2f37;letter-spacing:-0.404px;-webkit-text-stroke:0.3px #2b2f37">None on File</div>
<div class="t" style="left:672.9px;top:380.5px;font-size:7.9px;color:#38543f;letter-spacing:-0.173px;-webkit-text-stroke:0.2px #38543f;width:30.7px;overflow:hidden">Complete</div>
<div class="t" style="left:722.3px;top:380.5px;font-size:7.9px;color:#2b2f37;letter-spacing:-0.217px;-webkit-text-stroke:0.3px #2b2f37">Active</div>
<div class="t" style="left:805.9px;top:380.5px;font-size:7.9px;color:#7a62d4;letter-spacing:-0.458px;-webkit-text-stroke:0.18px #7a62d4">Viewed</div>
<div class="t" style="left:154.7px;top:407.7px;font-size:7.6px;color:#fff;letter-spacing:-1.634px">1</div>
<div class="t" style="left:181.4px;top:407.6px;font-size:7.8px;color:#3b404a;letter-spacing:-0.694px">Show:</div>
<div class="t" style="left:204.0px;top:407.6px;font-size:7.8px;color:#3b404a;letter-spacing:-0.805px">100</div>
<div class="t" style="left:799.2px;top:407.9px;font-size:7.3px;color:#9095a0;letter-spacing:-0.260px">Showing 1-8 of 8</div>
<div class="t" style="left:144.5px;top:450.9px;font-size:7.5px;color:#30353e;letter-spacing:-0.115px;font-style:italic">†Options for individual states can change periodically. Our Research Department reviews data for each state continuously.</div>
</div>
<div class="a" style="left:852px;top:37px;width:12.7px;height:567px;background:linear-gradient(to right,rgba(110,110,120,0) 0%,rgba(110,110,120,.03) 35%,rgba(105,105,115,.1) 58%,rgba(95,95,105,.24) 78%,rgba(75,75,85,.5) 92%,rgba(50,35,45,.85) 100%)"></div>
<div class="a" style="left:859.5px;top:1px;width:5.2px;height:36px;background:linear-gradient(to right,rgba(5,10,40,0) 0%,rgba(5,10,40,.12) 50%,rgba(5,8,30,.5) 100%)"></div>
<div class="a" style="left:864.6px;top:0;width:1.4px;height:604px;background:linear-gradient(to bottom,#1a1420 0%,#2a1020 25%,#5a0f1c 45%,#2a1030 60%,#8a1020 75%,#1a1014 100%)"></div>
<div class="a" style="left:0;top:602.5px;width:134px;height:1.5px;background:#e6e6e9"></div>
<div class="a" style="left:134px;top:600.8px;width:730px;height:3.2px;background:#fdfdfe"></div>
<div class="a" style="left:0;top:0;width:43px;height:1px;background:#fff"></div>
</body></html>
